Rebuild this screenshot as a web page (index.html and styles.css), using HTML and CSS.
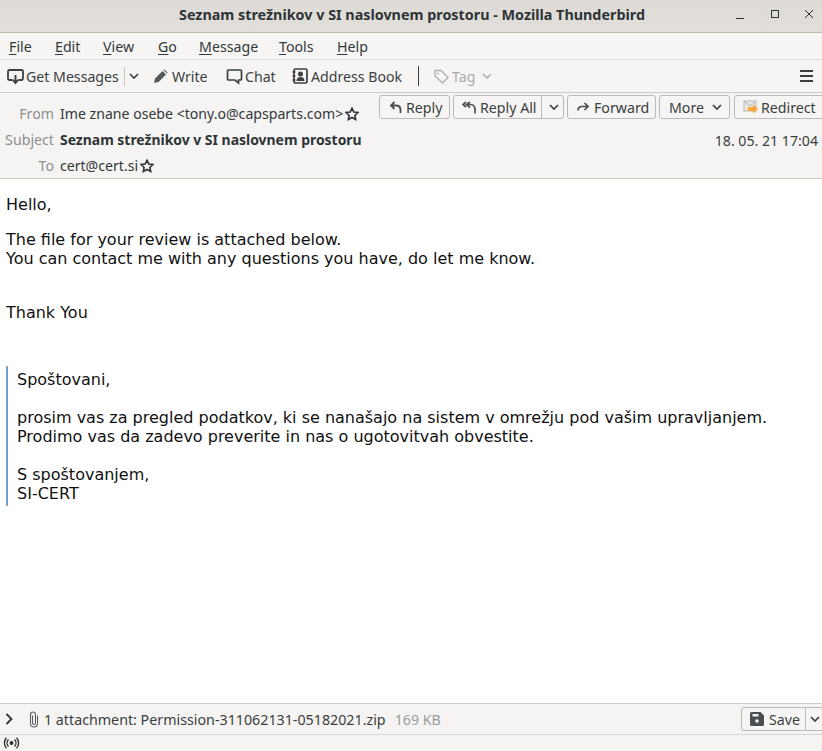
FILE: index.html
```html
<!DOCTYPE html>
<html lang="en">
<head>
<meta charset="utf-8">
<title>Seznam strežnikov v SI naslovnem prostoru - Mozilla Thunderbird</title>
<link rel="stylesheet" href="styles.css">
</head>
<body>
<div class="window">
  <header class="titlebar">
    <div class="title">Seznam strežnikov v SI naslovnem prostoru - Mozilla Thunderbird</div>
    <div class="controls">
      <svg class="wc" width="10" height="10" viewBox="0 0 10 10"><path d="M0 9.500h8" stroke="#2e3436" fill="none"/></svg>
      <svg class="wc" width="10" height="10" viewBox="0 0 10 10"><rect x="1.500" y="1.500" width="7" height="7" stroke="#2e3436" fill="none"/></svg>
      <svg class="wc" width="10" height="10" viewBox="0 0 10 10"><path d="M1 1l8 8M9 1l-8 8" stroke="#2e3436" fill="none"/></svg>
    </div>
  </header>
  <nav class="menubar">
    <span><u>F</u>ile</span><span><u>E</u>dit</span><span><u>V</u>iew</span><span><u>G</u>o</span><span><u>M</u>essage</span><span><u>T</u>ools</span><span><u>H</u>elp</span>
  </nav>
  <div class="toolbar">
    <div class="tool tool-get">
      <svg width="17" height="17" viewBox="0 0 17 17"><path d="M5 12H2.500A1.500 1.500 0 0 1 1 10.500V3.500A1.500 1.500 0 0 1 2.500 2h12A1.500 1.500 0 0 1 16 3.500v7a1.500 1.500 0 0 1-1.500 1.500H12" fill="none" stroke="#3b3f42" stroke-width="1.800"/><path d="M8.500 7v7M5.500 11.500l3 3.500 3-3.500" fill="none" stroke="#3b3f42" stroke-width="1.900"/></svg>
      <span>Get Messages</span>
    </div>
    <div class="tool-split"></div>
    <svg class="chev chev-get" width="10" height="6" viewBox="0 0 10 6"><path d="M1 1l4 4 4-4" fill="none" stroke="#3b3f42" stroke-width="1.700"/></svg>
    <div class="tool tool-write">
      <svg width="15" height="15" viewBox="0 0 15 15"><path d="M1 14l1-4.500 7.500-7.500 3.500 3.500-7.500 7.500zM10.500 1l1-.5 3 3-.5 1z" fill="#55595c"/></svg>
      <span>Write</span>
    </div>
    <div class="tool tool-chat">
      <svg width="17" height="17" viewBox="0 0 17 17"><path d="M2.500 2h12A1 1 0 0 1 15.500 3v8a1 1 0 0 1-1 1H12.500v3l-3.500-3H2.500a1 1 0 0 1-1-1V3a1 1 0 0 1 1-1z" fill="none" stroke="#3b3f42" stroke-width="1.700"/></svg>
      <span>Chat</span>
    </div>
    <div class="tool tool-book">
      <svg width="16" height="16" viewBox="0 0 16 16"><rect x="2" y="1" width="13" height="14" rx="1.500" fill="none" stroke="#3b3f42" stroke-width="1.700"/><circle cx="8.500" cy="6" r="2.500" fill="#3b3f42"/><path d="M4.500 13c0-3 1.500-4 4-4s4 1 4 4z" fill="#3b3f42"/><path d="M0.500 4h3M0.500 8h3M0.500 12h3" stroke="#3b3f42" stroke-width="1.400"/></svg>
      <span>Address Book</span>
    </div>
    <div class="tool-sep"></div>
    <div class="tool tool-tag">
      <svg width="15" height="15" viewBox="0 0 15 15"><path d="M1 1.500h6l7 7-5.500 5.500-7.500-7z" fill="none" stroke="#aeb1b3" stroke-width="1.400"/><circle cx="4" cy="4.500" r="1" fill="#aeb1b3"/></svg>
      <span>Tag</span>
      <svg class="chev" width="10" height="6" viewBox="0 0 10 6"><path d="M1 1l4 4 4-4" fill="none" stroke="#aeb1b3" stroke-width="1.600"/></svg>
    </div>
    <svg class="hamburger" width="13" height="12" viewBox="0 0 13 12"><path d="M0 1h13M0 6h13M0 11h13" stroke="#3b3f42" stroke-width="1.800"/></svg>
  </div>
  <section class="headers">
    <div class="hrow hrow-from">
      <span class="hlabel">From</span>
      <span class="hval">Ime znane osebe &lt;tony.o@capsparts.com&gt;</span>
      <svg class="star" width="14" height="14" viewBox="0 0 14 14"><path d="M7 1.200l1.800 3.800 4.100.5-3 2.900.8 4.100L7 10.500l-3.700 2 .8-4.100-3-2.900 4.100-.5z" fill="none" stroke="#2e3436" stroke-width="1.600"/></svg>
      <div class="actions">
        <button class="btn btn-reply"><svg width="13" height="13" viewBox="0 0 13 13"><path d="M5.500 1L2 4.500 5.500 8M2.500 4.500h4.500c3 0 4.500 2 4.500 4.500v3" fill="none" stroke="#4a4e51" stroke-width="1.800"/></svg><span>Reply</span></button>
        <button class="btn btn-replyall"><svg width="15" height="13" viewBox="0 0 15 13"><path d="M4 1L1 3.500 4 6M8 1L4.500 3.500 8 6.500M5 3.500h3.500c3 0 4.500 2.500 4.500 5v4" fill="none" stroke="#4a4e51" stroke-width="1.700"/></svg><span>Reply All</span><i class="btn-div"></i><svg class="chev" width="10" height="6" viewBox="0 0 10 6"><path d="M1 1l4 4 4-4" fill="none" stroke="#3b3f42" stroke-width="1.700"/></svg></button>
        <button class="btn btn-forward"><svg width="12" height="11" viewBox="0 0 12 11"><path d="M7.500 1L11 4.500 7.500 8M11 4.500H5C2.500 4.500 1 6 1 8.500" fill="none" stroke="#4a4e51" stroke-width="1.700"/></svg><span>Forward</span></button>
        <button class="btn btn-more"><span>More</span><svg class="chev" width="10" height="6" viewBox="0 0 10 6"><path d="M1 1l4 4 4-4" fill="none" stroke="#3b3f42" stroke-width="1.700"/></svg></button>
        <button class="btn btn-redirect"><svg width="16" height="16" viewBox="0 0 16 16"><rect x="1" y="2" width="12" height="10" fill="#e9e7e3" stroke="#b9b7b2"/><path d="M1 2l6 5 6-5" fill="none" stroke="#b9b7b2"/><path d="M5 8h5V5.500L15 10l-5 4.500V12H5z" fill="#f5a63a"/></svg><span>Redirect</span></button>
      </div>
    </div>
    <div class="hrow hrow-subject">
      <span class="hlabel">Subject</span>
      <span class="hval hsubject">Seznam strežnikov v SI naslovnem prostoru</span>
      <span class="hdate">18. 05. 21 17:04</span>
    </div>
    <div class="hrow hrow-to">
      <span class="hlabel">To</span>
      <span class="hval">cert@cert.si</span>
      <svg class="star" width="14" height="14" viewBox="0 0 14 14"><path d="M7 1.200l1.800 3.800 4.100.5-3 2.900.8 4.100L7 10.500l-3.700 2 .8-4.100-3-2.900 4.100-.5z" fill="none" stroke="#2e3436" stroke-width="1.600"/></svg>
    </div>
  </section>
  <main class="message">
    <p>Hello,</p>
    <p>The file for your review is attached below.<br>You can contact me with any questions you have, do let me know.</p>
    <p class="thanks">Thank You</p>
    <blockquote class="quote">
      <p>Spoštovani,</p>
      <p>prosim vas za pregled podatkov, ki se nanašajo na sistem v omrežju pod vašim upravljanjem.<br>Prodimo vas da zadevo preverite in nas o ugotovitvah obvestite.</p>
      <p>S spoštovanjem,<br>SI-CERT</p>
    </blockquote>
  </main>
  <section class="attach">
    <svg class="attach-arrow" width="8" height="12" viewBox="0 0 8 12"><path d="M1.500 1l5 5-5 5" fill="none" stroke="#2e3436" stroke-width="1.800"/></svg>
    <svg class="clip" width="10" height="17" viewBox="0 0 10 17"><path d="M3.500 4.500v7.500a1.500 1.500 0 0 0 3 0V3.500a2.500 2.500 0 0 0-5 0V12.500a3.500 3.500 0 0 0 7 0V4.500" fill="none" stroke="#5a5e61" stroke-width="1.100"/></svg>
    <span class="attach-name">1 attachment: Permission-311062131-05182021.zip</span>
    <span class="attach-size">169 KB</span>
    <button class="btn btn-save"><svg width="14" height="14" viewBox="0 0 14 14"><path d="M1.500 0h9L14 3.500v9a1.500 1.500 0 0 1-1.500 1.500h-11A1.500 1.500 0 0 1 0 12.500v-11A1.500 1.500 0 0 1 1.500 0z" fill="#4a4e51"/><rect x="2.500" y="2" width="6" height="2.500" fill="#f5f4f2"/><circle cx="7" cy="9" r="1.800" fill="#f5f4f2"/></svg><span class="save-label">Save</span><i class="btn-div"></i><svg class="chev" width="10" height="6" viewBox="0 0 10 6"><path d="M1 1l4 4 4-4" fill="none" stroke="#3b3f42" stroke-width="1.700"/></svg></button>
  </section>
  <footer class="status">
    <svg width="17" height="12" viewBox="0 0 17 12"><circle cx="8.500" cy="6" r="2" fill="#2e3436"/><path d="M5.500 2.500a5 5 0 0 0 0 7M11.500 2.500a5 5 0 0 1 0 7M3.500 .8a7.500 7.500 0 0 0 0 10.400M13.500 .8a7.500 7.500 0 0 1 0 10.400" fill="none" stroke="#2e3436" stroke-width="1.400"/></svg>
  </footer>
</div>
</body>
</html>
```
FILE: styles.css
```css
* { box-sizing: border-box; }
html, body { margin: 0; padding: 0; height: 100%; overflow: hidden; }
body { font-family: "Noto Sans", "Open Sans", sans-serif; font-size: 14px; color: #3a3e41; background: #f6f5f3; }
.window { display: flex; flex-direction: column; height: 751px; width: 822px; overflow: hidden; }

.titlebar { flex: none; height: 33px; background: linear-gradient(#dedbd7, #e2dfdb); border-bottom: 1px solid #bfb8b1; display: flex; align-items: center; position: relative; }
.title { width: 100%; text-align: center; font-weight: 700; font-size: 14.35px; color: #2e3436; padding-bottom: 3px; padding-left: 2px; }
.controls { position: absolute; top: 9px; left: 736px; display: grid; grid-template-columns: 34px 34px 10px; }
.wc { display: block; }

.menubar { flex: none; height: 27px; background: #f6f5f3; border-bottom: 1px solid #dcdad6; display: grid; grid-template-columns: 46px 48px 55px 41px 80px 58px auto; justify-content: start; align-items: center; padding: 1px 0 0 9px; font-size: 14.2px; color: #33383b; }
.menubar u { text-underline-offset: 2px; }

.toolbar { flex: none; height: 33px; background: #f6f5f3; border-bottom: 1px solid #cfccc8; display: flex; align-items: center; padding-left: 7px; font-size: 14.15px; color: #3a3e41; }
.tool { display: flex; align-items: center; gap: 2px; flex: none; }
.tool-get { width: 117px; }
.tool-split { width: 1px; height: 19px; background: #c9c7c3; flex: none; }
.chev { display: block; flex: none; }
.chev-get { margin-left: 4px; }
.tool-write { margin-left: 14px; width: 58px; gap: 4px; }
.tool-chat { margin-left: 15px; width: 52px; }
.tool-book { margin-left: 14px; width: 113px; gap: 3px; }
.tool-sep { width: 1px; height: 20px; background: #3a3e41; margin-left: 13px; flex: none; }
.tool-tag { margin-left: 15px; color: #a9acae; gap: 3px; }
.tool-tag .chev { margin-left: 4px; }
.hamburger { margin-left: auto; margin-right: 9px; display: block; }

.headers { flex: none; height: 86px; background: #f5f4f2; border-bottom: 1px solid #cfccc8; font-size: 14px; position: relative; }
.hrow { display: flex; align-items: center; }
.hrow-from { height: 36px; padding-top: 5px; }
.hrow-subject { height: 21px; }
.hrow-to { height: 28px; padding-top: 3px; }
.hlabel { width: 54px; flex: none; text-align: right; color: #8c8f91; font-size: 14.2px; }
.hval { margin-left: 6px; font-size: 14.1px; color: #33383b; white-space: nowrap; }
.hsubject { font-weight: 700; color: #2e3436; font-size: 13.95px; }
.star { margin-left: 2px; flex: none; display: block; }
.hdate { margin-left: auto; margin-right: 4px; font-size: 14.15px; color: #3a3e41; position: relative; top: 1px; }
.actions { position: absolute; top: 2px; left: 379px; display: flex; gap: 3px; }

.btn { font: inherit; color: #3a3e41; background: #f6f5f3; border: 1px solid #bdbbb8; border-radius: 3px; height: 24px; padding: 0; display: flex; align-items: center; flex: none; font-size: 14.2px; white-space: nowrap; }
.btn-div { display: block; width: 1px; align-self: stretch; background: #bdbbb8; }
.btn-reply { width: 71px; padding-left: 9px; gap: 4px; }
.btn-replyall { width: 111px; padding-left: 8px; gap: 3px; }
.btn-replyall .btn-div { margin-left: auto; }
.btn-replyall .chev { margin: 0 4px 0 4px; }
.btn-forward { width: 89px; padding-left: 9px; gap: 5px; }
.btn-more { width: 71px; padding-left: 9px; gap: 8px; }
.btn-redirect { width: 92px; padding-left: 8px; gap: 2px; margin-left: 1px; }

.message { flex: 1 1 0; min-height: 0; background: #fff; color: #111; font-family: "DejaVu Sans", sans-serif; font-size: 16px; line-height: 19px; padding: 16px 6px 0; overflow: hidden; }
.message p { margin: 0 0 16px; white-space: nowrap; }
.message .thanks { margin-top: 35px; }
.quote { margin: 44px 0 0; border-left: 2px solid #729fcf; padding: 4px 0 3px 9px; }
.message .quote p { margin: 0 0 19px; }
.message .quote p:last-child { margin-bottom: 0; }

.attach { flex: none; height: 32px; background: #f5f4f2; border-top: 1px solid #cfccc8; border-bottom: 1px solid #d8d6d2; display: flex; align-items: center; padding-left: 5px; font-size: 14.25px; color: #3a3e41; }
.clip { margin-left: 16px; flex: none; display: block; }
.attach-name { margin-left: 5px; white-space: nowrap; }
.attach-size { margin-left: 9px; color: #9a9d9f; white-space: nowrap; }
.btn-save { margin-left: auto; width: 84px; padding-left: 8px; margin-right: -3px; }
.save-label { margin-left: 5px; }
.btn-save .btn-div { margin-left: auto; }
.btn-save .chev { margin: 0 4px; }

.status { flex: none; height: 16px; background: #f5f4f2; display: flex; align-items: center; padding-left: 3px; }
```
